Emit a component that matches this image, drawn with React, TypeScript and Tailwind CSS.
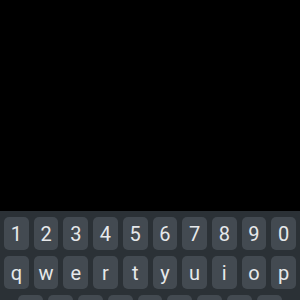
const ROWS: string[][] = [
  ['1', '2', '3', '4', '5', '6', '7', '8', '9', '0'],
  ['q', 'w', 'e', 'r', 't', 'y', 'u', 'i', 'o', 'p'],
  ['a', 's', 'd', 'f', 'g', 'h', 'j', 'k', 'l'],
]

export default function App() {
  return (
    <div className="h-[300px] w-[300px] overflow-hidden bg-black flex flex-col" style={{ fontFamily: 'Roboto, "Noto Sans", sans-serif' }}>
      <div className="h-[211px] shrink-0 bg-black" />
      <div className="flex-1 bg-[#2b3136] pt-[6px] flex flex-col gap-[6px]">
        {ROWS.map((row, r) => (
          <div key={r} className={`flex gap-[5px] ${r === 2 ? 'px-[18px]' : 'px-[4px]'}`}>
            {row.map((k) => (
              <div
                key={k}
                className="flex-1 h-[33px] shrink-0 rounded-[5px] bg-[#434a51] flex items-center justify-center text-[20px] leading-none text-[#e6e8ea]"
              >
                {k}
              </div>
            ))}
          </div>
        ))}
      </div>
    </div>
  )
}
